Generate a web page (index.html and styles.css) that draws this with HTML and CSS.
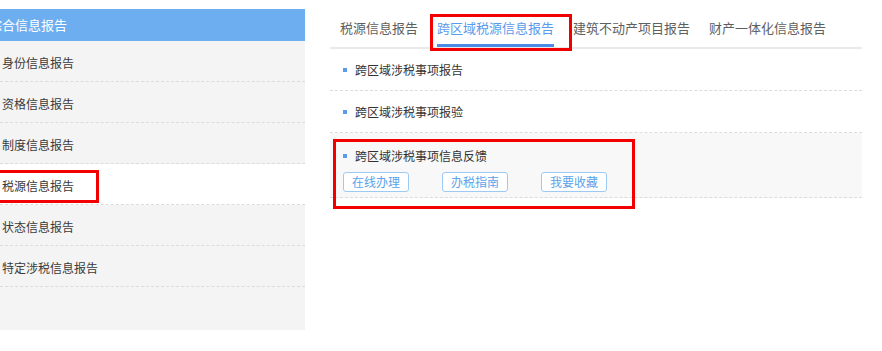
FILE: index.html
```html
<!DOCTYPE html>
<html lang="zh-CN">
<head>
    <meta charset="UTF-8">
    <meta name="viewport" content="width=device-width, initial-scale=1.0">
    <title>税源信息报告</title>
    <link rel="stylesheet" href="styles.css">
</head>
<body>
    <div class="page">
        <aside class="side">
            <div class="side-title">综合信息报告</div>
            <ul class="side-menu">
                <li>身份信息报告</li>
                <li>资格信息报告</li>
                <li>制度信息报告</li>
                <li class="current">税源信息报告<span class="mark mark-side"></span></li>
                <li>状态信息报告</li>
                <li>特定涉税信息报告</li>
            </ul>
        </aside>

        <main class="content">
            <ul class="tabs">
                <li>税源信息报告</li>
                <li class="active">跨区域税源信息报告<span class="mark mark-tab"></span></li>
                <li>建筑不动产项目报告</li>
                <li>财产一体化信息报告</li>
            </ul>

            <ul class="items">
                <li class="item">
                    <div class="item-title"><span class="dot"></span>跨区域涉税事项报告</div>
                </li>
                <li class="item">
                    <div class="item-title"><span class="dot"></span>跨区域涉税事项报验</div>
                </li>
                <li class="item open">
                    <div class="item-title"><span class="dot"></span>跨区域涉税事项信息反馈</div>
                    <div class="item-btns">
                        <a class="btn">在线办理</a>
                        <a class="btn">办税指南</a>
                        <a class="btn">我要收藏</a>
                    </div>
                    <span class="mark mark-item"></span>
                </li>
            </ul>
        </main>
    </div>
</body>
</html>
```

FILE: styles.css
```css
* {
    box-sizing: border-box;
}
body {
    margin: 0;
    background: #fff;
    font-family: "Noto Sans CJK SC", "Noto Sans", sans-serif;
    color: #333;
    overflow: hidden;
}
ul {
    list-style: none;
    margin: 0;
    padding: 0;
}
.page {
    display: flex;
    align-items: flex-start;
}

/* 左侧菜单 */
.side {
    width: 305px;
    height: 321px;
    margin-top: 9px;
    background: #f4f4f4;
    flex-shrink: 0;
}
.side-title {
    height: 32px;
    line-height: 32px;
    background: #6caef0;
    color: #fff;
    font-size: 13px;
    text-indent: -11px;
    white-space: nowrap;
    overflow: hidden;
}
.side-menu li {
    position: relative;
    height: 41px;
    padding: 4px 0 0 2px;
    line-height: 36px;
    font-size: 12px;
    color: #3a3a3a;
    border-bottom: 1px dashed #dcdcdc;
}
.side-menu li.current {
    background: #fff;
}

/* 红色标注框 */
.mark {
    position: absolute;
    border: 3px solid #f20000;
    pointer-events: none;
}
.mark-side {
    left: -10px;
    top: 6px;
    width: 109px;
    height: 33px;
}
.mark-tab {
    left: -7px;
    top: -2px;
    width: 142px;
    height: 37px;
}
.mark-item {
    left: 3px;
    top: 6px;
    width: 302px;
    height: 70px;
}

/* 右侧内容 */
.content {
    width: 532px;
    margin-left: 25px;
}
.tabs {
    display: flex;
    gap: 19px;
    padding: 16px 0 0 10px;
    border-bottom: 2px solid #e9e9e9;
}
.tabs li {
    position: relative;
    font-size: 13px;
    line-height: 24px;
    padding-bottom: 4px;
    border-bottom: 3px solid transparent;
    color: #5f5f5f;
    white-space: nowrap;
}
.tabs li.active {
    color: #5a9bec;
    border-bottom-color: #4a8ce6;
}

.item {
    position: relative;
    padding: 14px 0 13px 13px;
    border-bottom: 1px dashed #dcdcdc;
}
.item.open {
    padding: 16px 0 5px 13px;
    background: #f8f8f8;
}
.item-title {
    display: flex;
    align-items: center;
    font-size: 12px;
    line-height: 14px;
    color: #333;
}
.dot {
    width: 4px;
    height: 4px;
    background: #5a9bec;
    margin-right: 8px;
}
.item-btns {
    display: flex;
    gap: 33px;
    margin-top: 9px;
}
.btn {
    width: 66px;
    height: 20px;
    line-height: 18px;
    text-align: center;
    font-size: 12px;
    color: #5aa2ea;
    background: #fff;
    border: 1px solid #9ccaf3;
    border-radius: 3px;
    cursor: pointer;
}
```
